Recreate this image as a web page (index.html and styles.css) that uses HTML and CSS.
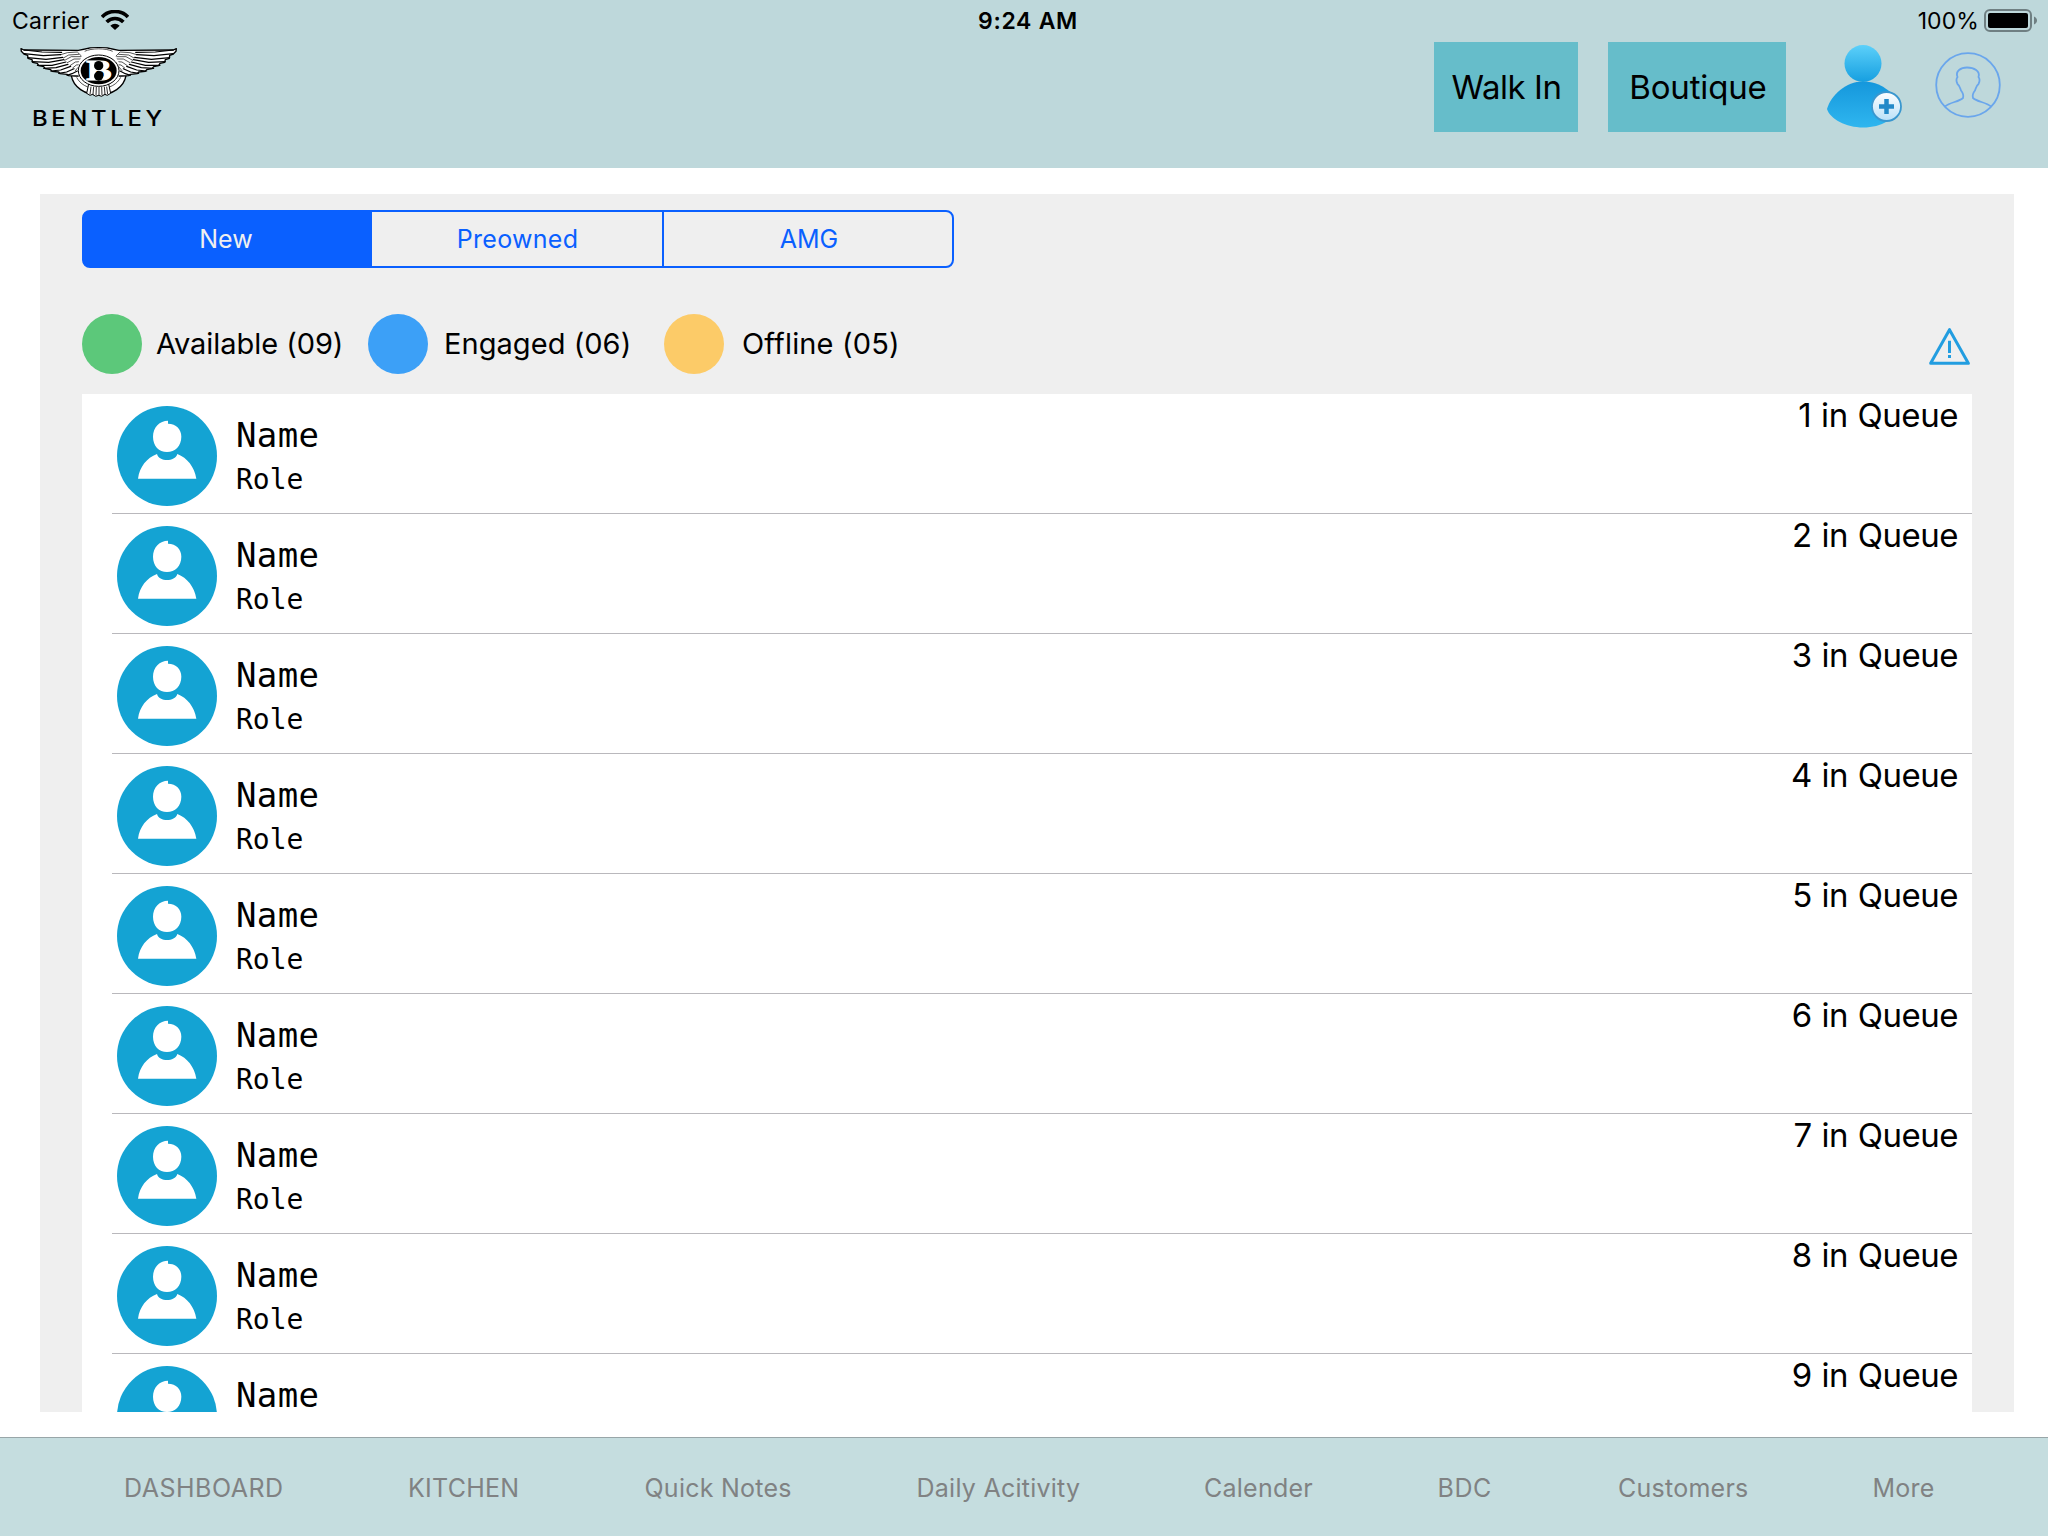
FILE: index.html
```
<!DOCTYPE html>
<html lang="en">
<head>
<meta charset="utf-8">
<title>Queue</title>
<link rel="stylesheet" href="styles.css">
</head>
<body>
<svg class="defs" aria-hidden="true">
  <defs>
    <symbol id="avatar" viewBox="0 0 300 300">
      <circle cx="150" cy="150" r="150" fill="#14a3d3"/>
      <path fill="#fff" d="M153 44V53C178 53 193 70 193 92C193 120 174 138 150 138C126 138 108 120 108 92C108 64 128 44 153 44Z"/>
      <path fill="#fff" d="M63 218C68 182 89 156 120 144C126 168 174 168 181 144C211 156 232 182 238 218Z"/>
    </symbol>
    <linearGradient id="headFill" x1="0" y1="0" x2="0" y2="1"><stop offset="0" stop-color="#5cd0fa"/><stop offset="1" stop-color="#169fe0"/></linearGradient>
    <linearGradient id="bodyFill" x1="0" y1="0" x2="0" y2="1"><stop offset="0" stop-color="#1597dc"/><stop offset="1" stop-color="#2fb6ef"/></linearGradient>
    <linearGradient id="badgeFill" x1="0" y1="0" x2="0" y2="1"><stop offset="0" stop-color="#fff"/><stop offset="1" stop-color="#b9e0f8"/></linearGradient>
  </defs>
</svg>
<div class="screen">
  <header class="header">
    <div class="status">
      <div class="status-left">
        <span class="carrier">Carrier</span>
        <svg class="wifi" viewBox="0 0 84 60">
          <path d="M3 21C24 -1 60 -1 81 21" fill="none" stroke="#000" stroke-width="11"/>
          <path d="M17 36C31 22 53 22 67 36" fill="none" stroke="#000" stroke-width="11"/>
          <path d="M28 47C36 39 48 39 56 47L42 60Z"/>
        </svg>
      </div>
      <span class="clock">9:24 AM</span>
      <div class="status-right">
        <span class="percent">100%</span>
        <svg class="battery" viewBox="0 0 53 23">
          <rect x="1" y="1" width="46" height="21" rx="5" fill="none" stroke="#6f7f82" stroke-width="2"/>
          <rect x="4" y="4" width="40" height="15" rx="2"/>
          <path d="M50 7.500C54 9 54 14 50 15.500Z" fill="#6f7f82"/>
        </svg>
      </div>
    </div>
    <div class="nav">
      <svg class="logo" viewBox="0 0 540 285">
        <defs>
          <g id="wing" stroke="#000" stroke-linejoin="round" stroke-linecap="round">
            <path fill="#fff" stroke-width="4" d="M33 26L42 30L205 31L240 24L266 23V110L196 108L176 107L171 103L150 101L146 96L126 94L122 89L106 86L101 80L86 77L82 70L68 67L66 59L54 55L53 46L42 42L34 34Z"/>
            <g fill="none" stroke-width="3.500">
              <path d="M42 30L96 36L155 37"/>
              <path d="M42 41L100 47L152 44"/>
              <path d="M53 53L108 58L158 52"/>
              <path d="M66 65L116 67L162 59"/>
              <path d="M82 76L126 76L168 66"/>
              <path d="M101 85L138 83L174 73"/>
              <path d="M122 93L152 90L182 79"/>
              <path d="M146 100L170 96L192 86"/>
              <path d="M171 106L186 101L202 93"/>
            </g>
            <g fill="none" stroke-width="2">
              <path d="M152 44L172 38L202 36L214 48"/>
              <path d="M160 54L176 45L206 43"/>
              <path d="M164 61L184 50L212 50"/>
              <path d="M172 68L192 57L212 57"/>
              <path d="M180 77L196 66L210 65"/>
              <path d="M188 84L199 75L209 74"/>
              <path d="M196 92L204 82L209 84"/>
            </g>
          </g>
        </defs>
        <path d="M184 107C190 142 225 164 266 165C307 164 342 142 348 107" fill="#fff" stroke="#000" stroke-width="4"/>
        <path d="M200 112C210 132 232 146 266 147C300 146 322 132 332 112" fill="none" stroke="#000" stroke-width="2"/>
        <use href="#wing"/>
        <use href="#wing" transform="translate(532 0) scale(-1 1)"/>
        <path d="M228 30C244 22 288 22 304 30L326 66V116L300 134H232L206 116V66Z" fill="#fff"/>
        <path d="M236 132L230 160L240 166L248 163L257 169L266 166L275 169L284 163L292 166L302 160L296 132Z" fill="#fff" stroke="#000" stroke-width="3"/>
        <path d="M243 140L240 163M251 140L249 163M259 140L258 166M267 140V166M275 140L276 166M283 140L285 163M290 140L293 163" stroke="#000" stroke-width="2.500"/>
        <path d="M224 34C244 24 288 24 308 34" fill="none" stroke="#000" stroke-width="2"/>
        <ellipse cx="266" cy="92" rx="61" ry="47" fill="#fff" stroke="#000" stroke-width="3"/>
        <ellipse cx="266" cy="92" rx="54" ry="41"/>
        <text class="logo-b" x="229" y="121" textLength="76" lengthAdjust="spacingAndGlyphs">B</text>
        <circle cx="266" cy="77" r="14"/>
        <circle cx="266" cy="108" r="14"/>
        <text class="logo-word" x="66" y="258" textLength="401" lengthAdjust="spacingAndGlyphs">BENTLEY</text>
      </svg>
      <div class="actions">
        <button class="btn btn-walk">Walk In</button>
        <button class="btn btn-boutique">Boutique</button>
        <svg class="add-user" viewBox="0 0 78 88">
          <path d="M1 64C5 50 20 36.500 37 36.500C54 36.500 68 47 73 60C70 74 56 82.500 37 82.500C20 82.500 4 74 1 64Z" fill="url(#bodyFill)"/>
          <circle cx="37" cy="18.500" r="18.500" fill="url(#headFill)"/>
          <circle cx="60.500" cy="61.500" r="14.500" fill="url(#badgeFill)" stroke="#3a97cf" stroke-width="1.800"/>
          <path d="M60.500 54V69M53 61.500H68" stroke="#2389c8" stroke-width="4.500"/>
        </svg>
        <svg class="profile" viewBox="0 0 66 66" fill="none" stroke="#6aa6ec" stroke-width="1.800">
          <circle cx="33" cy="33" r="31.800"/>
          <path d="M10 54.500C15 50 24 50 28 46C29 43 28 41 26 38.500C25 36 25 34 22.500 32C21 29 21 27 22.500 25C20 19 26 15.500 32 15.500C39 15.500 45.500 19 43.500 25C45 27 45 29 43.500 32C41 34 41 36 40 38.500C38 41 37 43 38 46C42 50 51 50 56 54.500"/>
        </svg>
      </div>
    </div>
  </header>

  <main class="panel">
    <div class="segments">
      <div class="segment segment-on">New</div>
      <div class="segment segment-wide">Preowned</div>
      <div class="segment segment-end">AMG</div>
    </div>
    <div class="legend">
      <i class="dot dot-available"></i><span class="label label-available">Available (09)</span>
      <i class="dot dot-engaged"></i><span class="label label-engaged">Engaged (06)</span>
      <i class="dot dot-offline"></i><span class="label label-offline">Offline (05)</span>
      <svg class="warning" viewBox="0 0 123 111" fill="none" stroke="#229de0">
        <path d="M61.500 5L118 106H5Z" stroke-width="9" stroke-linejoin="round"/>
        <path d="M61.500 38V75M61.500 81V90" stroke-width="9"/>
      </svg>
    </div>
    <div class="list">
      <div class="row"><svg class="avatar"><use href="#avatar"/></svg><div class="who"><div class="name">Name</div><div class="role">Role</div></div><div class="queue queue-first">1 in Queue</div></div>
      <div class="row"><svg class="avatar"><use href="#avatar"/></svg><div class="who"><div class="name">Name</div><div class="role">Role</div></div><div class="queue">2 in Queue</div></div>
      <div class="row"><svg class="avatar"><use href="#avatar"/></svg><div class="who"><div class="name">Name</div><div class="role">Role</div></div><div class="queue">3 in Queue</div></div>
      <div class="row"><svg class="avatar"><use href="#avatar"/></svg><div class="who"><div class="name">Name</div><div class="role">Role</div></div><div class="queue">4 in Queue</div></div>
      <div class="row"><svg class="avatar"><use href="#avatar"/></svg><div class="who"><div class="name">Name</div><div class="role">Role</div></div><div class="queue">5 in Queue</div></div>
      <div class="row"><svg class="avatar"><use href="#avatar"/></svg><div class="who"><div class="name">Name</div><div class="role">Role</div></div><div class="queue">6 in Queue</div></div>
      <div class="row"><svg class="avatar"><use href="#avatar"/></svg><div class="who"><div class="name">Name</div><div class="role">Role</div></div><div class="queue">7 in Queue</div></div>
      <div class="row"><svg class="avatar"><use href="#avatar"/></svg><div class="who"><div class="name">Name</div><div class="role">Role</div></div><div class="queue">8 in Queue</div></div>
      <div class="row row-last"><div class="avatar-clip"><svg class="avatar"><use href="#avatar"/></svg></div><div class="who"><div class="name">Name</div></div><div class="queue">9 in Queue</div></div>
    </div>
  </main>

  <nav class="tabs">
    <span class="tab-dashboard">DASHBOARD</span>
    <span>KITCHEN</span>
    <span>Quick Notes</span>
    <span>Daily Acitivity</span>
    <span>Calender</span>
    <span class="tab-bdc">BDC</span>
    <span>Customers</span>
    <span>More</span>
  </nav>
</div>
</body>
</html>
```
FILE: styles.css
```
* { box-sizing: border-box; }
body { margin: 0; background: #fff; color: #000; font-family: Inter, "Liberation Sans", sans-serif; }
svg { display: block; flex: none; }
.defs { width: 0; height: 0; position: absolute; }
.screen { width: 2048px; height: 1536px; display: flex; flex-direction: column; overflow: hidden; }

.header { height: 168px; background: #bed8db; flex: none; }
.status { height: 40px; display: grid; grid-template-columns: 1fr auto 1fr; align-items: center; padding: 1px 10px 0 12px; font-size: 23px; line-height: 40px; }
.status-left, .status-right { display: flex; align-items: center; }
.status-left { gap: 11px; }
.carrier { letter-spacing: 0.3px; }
.wifi { width: 28px; height: 20px; margin-top: -2px; }
.clock { font-weight: 600; letter-spacing: 0.7px; margin-left: 6px; }
.status-right { justify-content: flex-end; gap: 5px; margin-right: 1px; }
.battery { width: 53px; height: 23px; margin-top: -1px; }
.percent { letter-spacing: 0.1px; }

.nav { display: flex; justify-content: space-between; padding: 0 47px 0 10px; }
.logo { width: 180px; height: 95px; }
.logo-b { font: 700 86px "Liberation Serif", serif; fill: #fff; stroke: #fff; stroke-width: 3px; }
.logo-word { font: 500 66px Inter, sans-serif; letter-spacing: 10px; }
.actions { display: flex; padding-top: 2px; }
.btn { height: 90px; border: 0; padding: 0; background: #66bdca; color: #000; font: 33px Inter, sans-serif; }
.btn-walk { width: 144px; letter-spacing: -0.45px; margin-right: 30px; padding-left: 1px; }
.btn-boutique { width: 178px; letter-spacing: -0.15px; margin-right: 40px; padding-left: 2px; }
.add-user { width: 78px; height: 88px; margin-top: 3px; }
.profile { width: 66px; height: 66px; margin: 10px 0 0 31px; }

.panel { width: 1974px; height: 1218px; margin: 26px 0 0 40px; padding: 16px 42px 0; background: #efefef; display: flex; flex-direction: column; flex: none; }
.segments { width: 872px; height: 58px; flex: none; border: 2px solid #0a60ff; border-radius: 8px; background: linear-gradient(90deg, #0a60ff 50px, transparent 50px) border-box; display: flex; overflow: hidden; font-size: 25px; color: #0a60ff; }
.segment { flex: 1; display: flex; align-items: center; justify-content: center; }
.segment-on { flex: 0 0 288px; background: #0a60ff; color: #efefef; padding-right: 4px; }
.segment-wide { flex: 0 0 292px; border-right: 2px solid #0a60ff; letter-spacing: 0.3px; padding-left: 1px; }
.segment-end { padding-left: 2px; }

.legend { height: 60px; margin: 46px 0 20px; flex: none; display: flex; align-items: center; font-size: 29px; line-height: 60px; }
.dot { width: 60px; height: 60px; border-radius: 50%; flex: none; }
.dot-available { background: #5cc87a; }
.dot-engaged { background: #3ca0f7; }
.dot-offline { background: #fccb68; }
.label { white-space: nowrap; height: 60px; }
.label-available { width: 226px; padding-left: 14px; letter-spacing: -0.05px; }
.label-engaged { width: 236px; padding-left: 16px; letter-spacing: 0.05px; }
.label-offline { padding-left: 18px; letter-spacing: 0.15px; }
.warning { width: 41px; height: 37px; margin: 5px 2px 0 auto; }

.list { width: 1890px; flex: 1; min-height: 0; background: #fff; padding-left: 30px; }
.row { height: 120px; border-bottom: 1px solid #b9b8bc; padding: 0 14px 0 5px; display: flex; }
.row-last { height: 58px; border: 0; }
.avatar { width: 100px; height: 100px; margin-top: 12px; }
.avatar-clip { height: 58px; overflow: hidden; flex: none; }
.who { flex: 1; padding: 24px 0 0 19px; font-family: "DejaVu Sans Mono", "Liberation Mono", monospace; }
.name { font-size: 34px; line-height: 34px; letter-spacing: 0.4px; }
.role { font-size: 28px; line-height: 44px; margin-top: 6px; }
.queue { font-size: 33px; line-height: 42px; letter-spacing: -0.5px; word-spacing: 1px; white-space: nowrap; }
.queue-first { letter-spacing: -0.45px; }

.tabs { height: 99px; margin-top: auto; flex: none; border-top: 1px solid #98a6a8; background: #c5dddf; color: #808283; display: grid; grid-template-columns: 284px 236.5px 272px 287.5px 233.5px 180.5px 254.5px auto; padding-left: 124px; font-size: 25px; line-height: 100px; letter-spacing: 0.25px; white-space: nowrap; }
.tab-dashboard { letter-spacing: 0.5px; }
.tab-bdc { letter-spacing: 0.6px; }
```
